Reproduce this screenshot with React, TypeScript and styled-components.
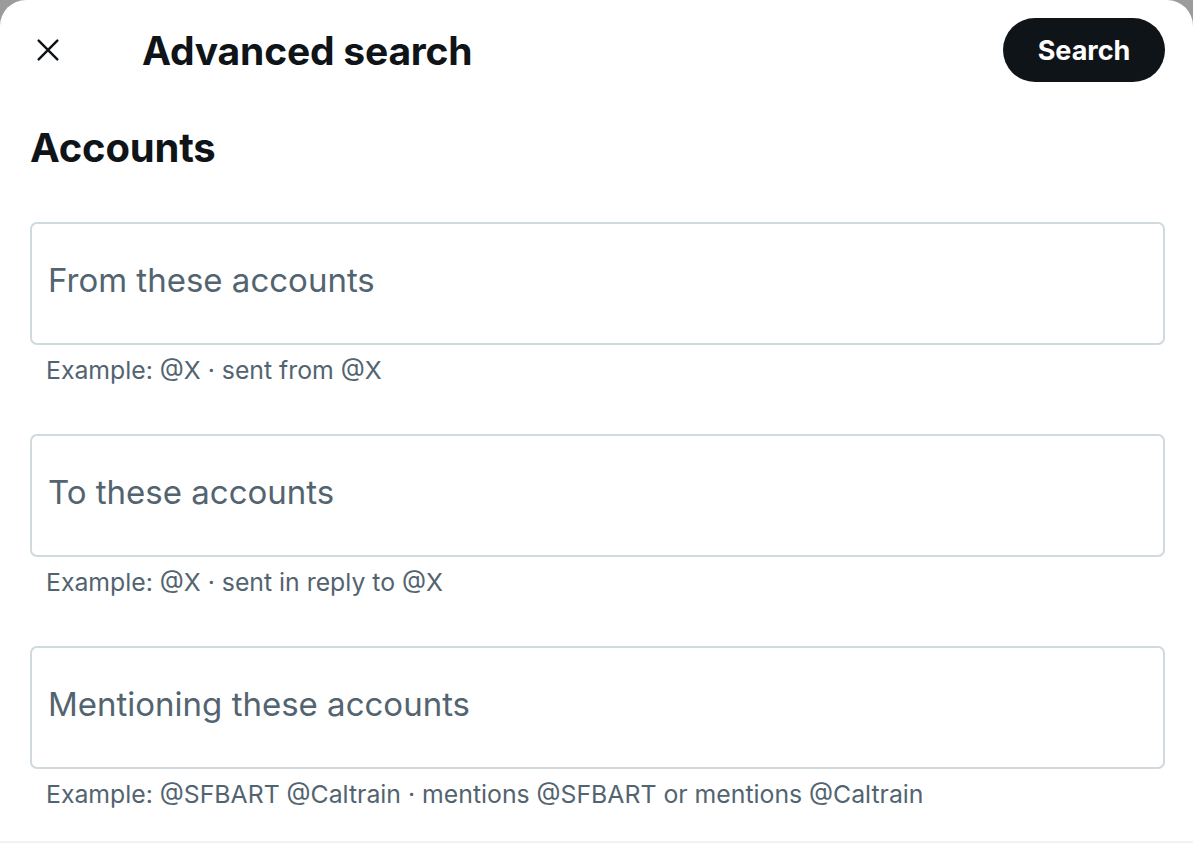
import styled, { createGlobalStyle } from "styled-components";

const GlobalStyle = createGlobalStyle`
    html, body {
        margin: 0;
        padding: 0;
        background: #9b9b9b;
    }
    body {
        font-family: Inter, "Noto Sans", "Liberation Sans", sans-serif;
        -webkit-font-smoothing: antialiased;
    }
`

const Modal = styled.div`
    width: 1193px;
    height: 856px;
    background: #fff;
    border-radius: 26px 26px 0 0;
    overflow: hidden;
    display: flex;
    flex-direction: column;
`
const Header = styled.div`
    height: 100px;
    display: flex;
    align-items: center;
    padding: 0 28px 0 22px;
`
const CloseButton = styled.div`
    width: 52px;
    height: 52px;
    display: flex;
    align-items: center;
    justify-content: center;
    color: #0f1419;
    cursor: pointer;
`
const Title = styled.h1`
    margin: 0 0 0 68px;
    flex: 1;
    font-size: 39px;
    font-weight: 700;
    color: #0f1419;
    letter-spacing: -0.2px;
`
const SearchButton = styled.button`
    height: 64px;
    width: 162px;
    border: none;
    border-radius: 32px;
    background: #0f1419;
    color: #fff;
    font-family: inherit;
    font-size: 27px;
    font-weight: 700;
    cursor: pointer;
`
const Body = styled.div`
    flex: 1;
    padding: 0 28px 0 30px;
`
const SectionTitle = styled.h2`
    margin: 22px 0 0;
    font-size: 40px;
    line-height: 52px;
    font-weight: 700;
    color: #0f1419;
    letter-spacing: -0.2px;
`
const FieldList = styled.div`
    margin-top: 48px;
    display: flex;
    flex-direction: column;
    gap: 28px;
`
const Field = styled.div`
    display: flex;
    flex-direction: column;
`
const InputBox = styled.label`
    height: 123px;
    box-sizing: border-box;
    border: 2px solid #cfd9de;
    border-radius: 7px;
    display: flex;
    align-items: center;
    padding: 0 16px;
`
const Input = styled.input`
    border: none;
    outline: none;
    width: 100%;
    font-family: inherit;
    font-size: 33px;
    color: #0f1419;
    background: transparent;
    padding: 0;
    margin-top: -8px;

    &::placeholder {
        color: #536471;
    }
`
const Hint = styled.div`
    padding: 10px 16px 0;
    height: 61px;
    box-sizing: border-box;
    font-size: 24.8px;
    color: #536471;
`
const Divider = styled.div`
    height: 2px;
    background: #eff3f4;
    margin-bottom: 13px;
`

const fields = [
    { placeholder: "From these accounts", hint: "Example: @X · sent from @X" },
    { placeholder: "To these accounts", hint: "Example: @X · sent in reply to @X" },
    { placeholder: "Mentioning these accounts", hint: "Example: @SFBART @Caltrain · mentions @SFBART or mentions @Caltrain" },
]

export default function App() {
    return (
        <>
            <GlobalStyle />
            <Modal>
                <Header>
                    <CloseButton>
                        <svg width="28" height="28" viewBox="0 0 24 24" fill="none" stroke="currentColor" strokeWidth="2.1" strokeLinecap="round">
                            <path d="M4 4L20 20M20 4L4 20" />
                        </svg>
                    </CloseButton>
                    <Title>Advanced search</Title>
                    <SearchButton>Search</SearchButton>
                </Header>
                <Body>
                    <SectionTitle>Accounts</SectionTitle>
                    <FieldList>
                        {fields.map((f) => (
                            <Field key={f.placeholder}>
                                <InputBox>
                                    <Input placeholder={f.placeholder} />
                                </InputBox>
                                <Hint>{f.hint}</Hint>
                            </Field>
                        ))}
                    </FieldList>
                </Body>
                <Divider />
            </Modal>
        </>
    )
}
